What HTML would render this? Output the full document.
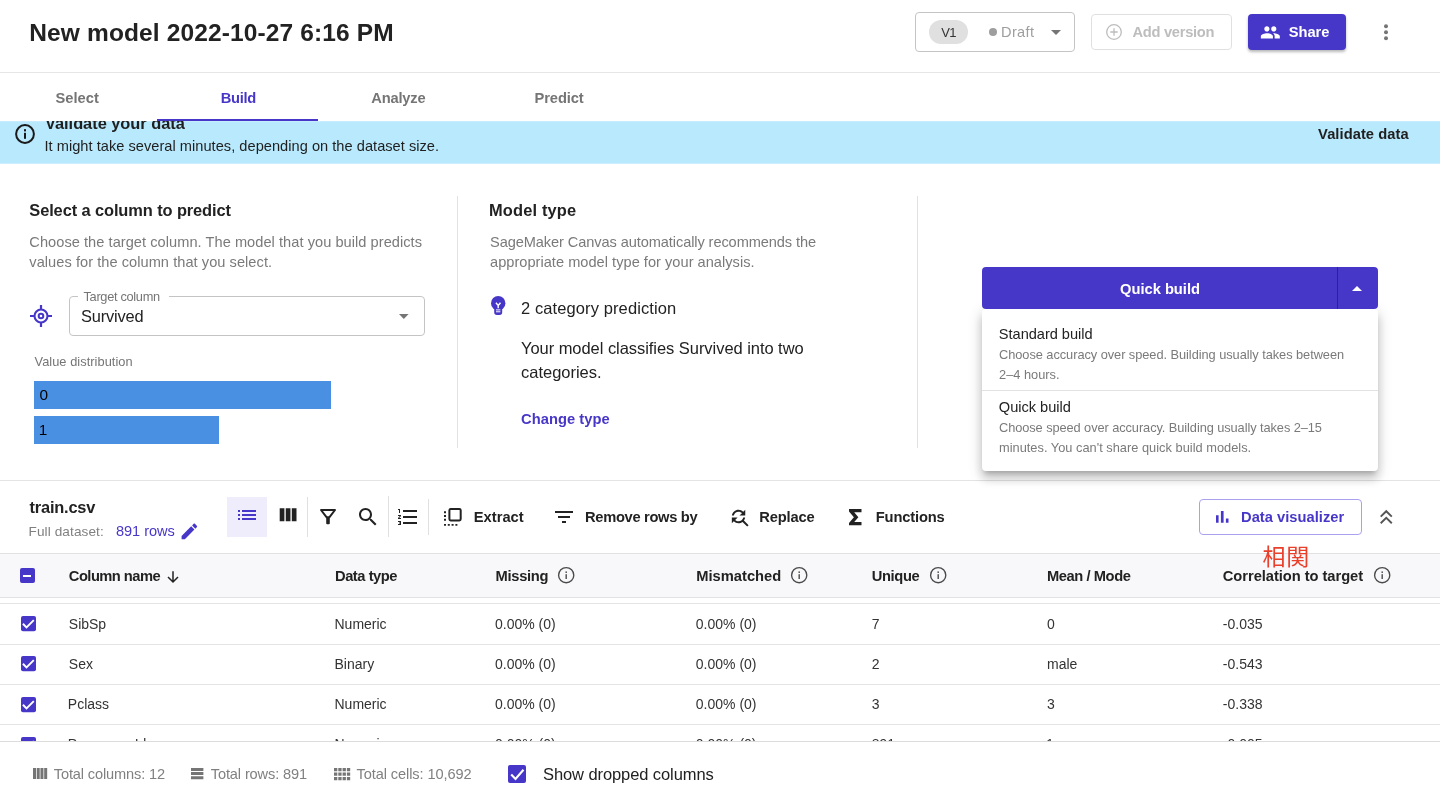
<!DOCTYPE html>
<html lang="en">
<head>
<meta charset="utf-8">
<title>New model 2022-10-27 6:16 PM</title>
<style>
*{box-sizing:border-box;margin:0;padding:0}
html,body{width:1440px;height:802px;overflow:hidden;background:#fff}
body{position:relative;font-family:"Liberation Sans",sans-serif;color:#222}
.t{position:absolute;white-space:pre;line-height:1;color:#222;z-index:2}
.abs,.abs>*{position:absolute}
.abs{left:0;top:0}
svg{position:absolute;overflow:visible}
.hl{position:absolute;height:1px;background:#e4e4e4}
.vl{position:absolute;width:1px;background:#e2e2e2}
</style>
</head>
<body>
<div id="root" style="position:absolute;left:0;top:0;width:1440px;height:802px;will-change:transform">
<!-- header -->
<div class="abs" style="left:0;top:72px;width:1440px;height:1px;background:#e6e6e6"></div>
<div class="abs" style="left:915px;top:12px;width:160px;height:40px;border:1px solid #c4c4c4;border-radius:4px"></div>
<div class="abs" style="left:929.2px;top:20px;width:39px;height:24px;border-radius:12px;background:#e0e0e0"></div>
<div class="abs" style="left:989px;top:28px;width:8px;height:8px;border-radius:4px;background:#9e9e9e"></div>
<svg style="left:1050.5px;top:30px" width="10" height="5" viewBox="0 0 10 5"><path d="M0 0h10L5 5z" fill="#757575"/></svg>
<div class="abs" style="left:1091px;top:14px;width:141px;height:36px;border:1px solid #e0e0e0;border-radius:4px"></div>
<svg style="left:1105.7px;top:24px" width="16" height="16" viewBox="0 0 16 16" fill="none" stroke="#bdbdbd" stroke-width="1.3"><circle cx="8" cy="8" r="7.3"/><path d="M8 4.3v7.4M4.3 8h7.4"/></svg>
<div class="abs" style="left:1248px;top:14px;width:98px;height:36px;border-radius:4px;background:#4737c8;box-shadow:0 2px 3px rgba(0,0,0,.28)"></div>
<svg style="left:1260.100px;top:21.700px" width="20.700" height="20.700" viewBox="0 0 24 24"><path fill="#fff" d="M16 11c1.66 0 2.99-1.34 2.99-3S17.66 5 16 5c-1.66 0-3 1.34-3 3s1.34 3 3 3zm-8 0c1.66 0 2.99-1.34 2.99-3S9.660 5 8 5C6.340 5 5 6.340 5 8s1.340 3 3 3zm0 2c-2.330 0-7 1.170-7 3.500V19h14v-2.500c0-2.330-4.670-3.500-7-3.500zm8 0c-.29 0-.62.020-.97.050 1.160.84 1.970 1.970 1.970 3.450V19h6v-2.500c0-2.330-4.670-3.500-7-3.500z"/></svg>
<svg style="left:1383.8px;top:24px" width="4" height="17" viewBox="0 0 4 17"><circle cx="2" cy="2.200" r="2" fill="#757575"/><circle cx="2" cy="8.200" r="2" fill="#757575"/><circle cx="2" cy="14.200" r="2" fill="#757575"/></svg>

<!-- banner -->
<div class="abs" style="left:0;top:121px;width:1440px;height:43px;background:linear-gradient(#c6edfd,#c6edfd 1px,#b9e9fc 1px,#b9e9fc 42px,#cdeffd 42px);overflow:hidden">
  <span style="position:absolute;left:45px;top:-6px;font-size:16.400px;font-weight:700;line-height:1;letter-spacing:-.03px;white-space:pre;color:#1f1f1f">Validate your data</span>
</div>
<svg style="left:15px;top:123.800px" width="20" height="20" viewBox="0 0 20 20"><circle cx="10" cy="10" r="8.900" fill="none" stroke="#1a1a1a" stroke-width="2"/><rect x="9" y="8.800" width="2" height="6" fill="#1a1a1a"/><rect x="9" y="5.200" width="2" height="2.200" fill="#1a1a1a"/></svg>
<!-- tab underline -->
<div class="abs" style="left:157.300px;top:119px;width:160.700px;height:2px;background:#4737c8"></div>

<!-- section dividers -->
<div class="vl" style="left:457px;top:195.500px;height:252.500px"></div>
<div class="vl" style="left:917px;top:195.500px;height:252.500px"></div>
<div class="hl" style="left:0;top:480px;width:1440px"></div>

<!-- section 1: target select -->
<svg style="left:29px;top:304px" width="24" height="24" viewBox="0 0 24 24" fill="none" stroke="#4737c8"><circle cx="12" cy="12" r="6.500" stroke-width="2.100"/><circle cx="12" cy="12" r="2.300" stroke-width="2"/><path d="M12 1v5M12 18v5M1 12h5M18 12h5" stroke-width="2.200"/></svg>
<div class="abs" style="left:68.900px;top:296px;width:355.800px;height:39.900px;border:1px solid #c4c4c4;border-radius:4px"></div>
<div class="abs" style="left:77.500px;top:295px;width:91.200px;height:3px;background:#fff"></div>
<svg style="left:398.800px;top:314px" width="9.600" height="5" viewBox="0 0 10 5"><path d="M0 0h10L5 5z" fill="#757575"/></svg>
<div class="abs" style="left:34px;top:381px;width:296.800px;height:27.800px;background:#4a90e2"></div>
<div class="abs" style="left:34px;top:416px;width:184.800px;height:27.800px;background:#4a90e2"></div>

<!-- section 2: bulb -->
<svg style="left:490.600px;top:296px" width="14.400" height="19" viewBox="0 0 14.400 19"><circle cx="7.200" cy="7.200" r="7.200" fill="#4737c8"/><path d="M3.200 10h8v6.300a2.700 2.700 0 0 1-2.700 2.700h-2.600a2.700 2.700 0 0 1-2.700-2.700z" fill="#4737c8"/><path d="M4.900 6.700l2.300 2.700 2.300-2.700M7.200 9.400v2.800" stroke="#fff" stroke-width="1.400" fill="none"/><path d="M5 13.900h4.400M5 15.800h4.400" stroke="#fff" stroke-width="1"/></svg>

<!-- section 3: quick build button + menu -->
<div class="abs" style="left:982px;top:309px;width:396px;height:162px;background:#fff;border-radius:4px;box-shadow:0 5px 5px -3px rgba(0,0,0,.2),0 8px 10px 1px rgba(0,0,0,.14),0 3px 14px 2px rgba(0,0,0,.12)"></div>
<div class="abs" style="left:982px;top:390px;width:396px;height:1px;background:#e2e2e2"></div>
<div class="abs" style="left:982px;top:267px;width:396px;height:42.400px;border-radius:4px;background:#4737c8"></div>
<div class="abs" style="left:1336.700px;top:267px;width:1px;height:42.400px;background:#2c1fa6"></div>
<svg style="left:1352.300px;top:286px" width="10" height="5" viewBox="0 0 10 5"><path d="M0 5h10L5 0z" fill="#fff"/></svg>

<!-- toolbar -->
<svg style="left:178.700px;top:520.900px" width="20.800" height="20.800" viewBox="0 0 24 24"><path fill="#4737c8" d="M3 17.250V21h3.750L17.810 9.940l-3.750-3.750L3 17.250zM20.710 7.040c.39-.39.39-1.020 0-1.410l-2.340-2.340c-.39-.39-1.020-.39-1.410 0l-1.830 1.830 3.750 3.750 1.830-1.830z"/></svg>
<div class="abs" style="left:227.200px;top:497px;width:40.200px;height:40px;background:#efedfb"></div>
<svg style="left:235.200px;top:502.800px" width="24" height="24" viewBox="0 0 24 24"><path fill="#4737c8" d="M3 13h2v-2H3v2zm0 4h2v-2H3v2zm0-8h2V7H3v2zm4 4h14v-2H7v2zm0 4h14v-2H7v2zM7 7v2h14V7H7z"/></svg>
<svg style="left:275.500px;top:503px" width="24" height="24" viewBox="0 0 24 24"><path fill="#222" d="M3.700 5.300h4.700v13h-4.700zM9.750 5.300h4.700v13h-4.700zM15.800 5.300h4.700v13h-4.700z"/></svg>
<div class="vl" style="left:307px;top:497px;height:40px;background:#e0e0e0"></div>
<svg style="left:316px;top:504.800px" width="24" height="24" viewBox="0 0 24 24"><path fill="none" stroke="#222" stroke-width="2" stroke-linejoin="round" d="M5 5h14l-5.500 7.200h-3z"/><path fill="#222" d="M10.200 12h3.600v6.300a1 1 0 0 1-1 1h-1.600a1 1 0 0 1-1-1z"/></svg>
<svg style="left:355.500px;top:504.800px" width="24" height="24" viewBox="0 0 24 24"><path fill="#222" d="M15.500 14h-.79l-.28-.27C15.410 12.590 16 11.110 16 9.500 16 5.910 13.090 3 9.500 3S3 5.910 3 9.500 5.910 16 9.500 16c1.610 0 3.090-.59 4.230-1.570l.27.28v.79l5 4.990L20.490 19l-4.990-5zm-6 0C7.010 14 5 11.990 5 9.500S7.010 5 9.500 5 14 7.010 14 9.500 11.990 14 9.500 14z"/></svg>
<div class="vl" style="left:388px;top:496px;height:41px;background:#e0e0e0"></div>
<svg style="left:396px;top:505px" width="24" height="24" viewBox="0 0 24 24"><path fill="#222" d="M2 17h2v.5H3v1h1v.5H2v1h3v-4H2v1zm1-9h1V4H2v1h1v3zm-1 3h1.800L2 13.100v.9h3v-1H3.200L5 10.900V10H2v1zm5-6v2h14V5H7zm0 14h14v-2H7v2zm0-6h14v-2H7v2z"/></svg>
<div class="vl" style="left:428px;top:498.800px;height:36.500px;background:#e0e0e0"></div>
<!-- extract icon -->
<svg style="left:444px;top:507.900px" width="17.700" height="17.700" viewBox="0 0 17.700 17.700" fill="none" stroke="#222"><rect x="5.400" y="1" width="11.300" height="11.400" rx="1.300" stroke-width="2"/><path d="M1 3.200v11" stroke-width="2" stroke-dasharray="2 1.800"/><path d="M0 16.800h14.500" stroke-width="1.800" stroke-dasharray="2 1.800"/></svg>
<!-- remove rows (filter_list) -->
<svg style="left:552.200px;top:505px" width="24" height="24" viewBox="0 0 24 24"><path fill="#222" d="M10 18h4v-2h-4v2zM3 6v2h18V6H3zm3 7h12v-2H6v2z"/></svg>
<!-- replace -->
<svg style="left:728px;top:506px" width="23" height="23" viewBox="0 0 24 24"><path fill="#222" d="M11 6c1.380 0 2.630.56 3.540 1.460L12 10h6V4l-2.050 2.050C14.680 4.780 12.930 4 11 4c-3.530 0-6.430 2.610-6.920 6H6.100c.46-2.280 2.480-4 4.900-4zm5.640 9.140c.66-.9 1.120-1.970 1.280-3.140H15.900c-.46 2.280-2.480 4-4.900 4-1.380 0-2.630-.56-3.540-1.460L10 12H4v6l2.050-2.050C7.320 17.220 9.070 18 11 18c1.550 0 2.980-.51 4.140-1.360L20 21.490 21.490 20l-4.850-4.860z"/></svg>
<!-- sigma -->
<svg style="left:848.800px;top:508.800px" width="12.500" height="16.300" viewBox="0 0 12.500 16.300"><path fill="#222" d="M0 0h12.500v3.200H5.200l4.200 4.950-4.200 4.950h7.300v3.200H0v-2.400l4.900-5.750L0 2.400z"/></svg>
<!-- data visualizer -->
<div class="abs" style="left:1199px;top:499px;width:162.500px;height:36px;border:1px solid #a9a0ee;border-radius:4px"></div>
<svg style="left:1216px;top:511.200px" width="12.500" height="11.800" viewBox="0 0 12.500 11.800"><path fill="#4737c8" d="M0 4.300h2.600v7.500H0zM4.900 0h2.700v11.800H4.900zM9.900 7.400h2.600v4.400H9.900z"/></svg>
<svg style="left:1379.800px;top:510px" width="12.500" height="14" viewBox="0 0 12.500 14" fill="none" stroke="#555" stroke-width="1.900"><path d="M.7 6.600L6.250 1.200 11.800 6.600M.7 13.200L6.250 7.800 11.800 13.200"/></svg>

<!-- table header -->
<div class="abs" style="left:0;top:553px;width:1440px;height:45px;background:#f8f8fa;border-top:1px solid #e2e2e2;border-bottom:1px solid #e2e2e2"></div>
<div class="abs" style="left:19.500px;top:568.200px;width:15px;height:15px;border-radius:2px;background:#4737c8"></div>
<div class="abs" style="left:23px;top:574.800px;width:8px;height:2px;background:#fff"></div>
<svg style="left:167px;top:571px" width="12" height="12" viewBox="0 0 12 12" fill="none" stroke="#222" stroke-width="1.500"><path d="M6 .3v10.500M1 6l5 5 5-5"/></svg>
<svg style="left:557.5px;top:567.4px" width="16.400" height="16.400" viewBox="0 0 16.400 16.400"><circle cx="8.200" cy="8.200" r="7.600" fill="none" stroke="#4a4a4a" stroke-width="1.350"/><rect x="7.500" y="7.200" width="1.400" height="4.800" fill="#4a4a4a"/><rect x="7.500" y="4.400" width="1.400" height="1.600" fill="#4a4a4a"/></svg>
<svg style="left:790.7px;top:567.4px" width="16.400" height="16.400" viewBox="0 0 16.400 16.400"><circle cx="8.200" cy="8.200" r="7.600" fill="none" stroke="#4a4a4a" stroke-width="1.350"/><rect x="7.500" y="7.200" width="1.400" height="4.800" fill="#4a4a4a"/><rect x="7.500" y="4.400" width="1.400" height="1.600" fill="#4a4a4a"/></svg>
<svg style="left:930.1px;top:567.4px" width="16.400" height="16.400" viewBox="0 0 16.400 16.400"><circle cx="8.200" cy="8.200" r="7.600" fill="none" stroke="#4a4a4a" stroke-width="1.350"/><rect x="7.500" y="7.200" width="1.400" height="4.800" fill="#4a4a4a"/><rect x="7.500" y="4.400" width="1.400" height="1.600" fill="#4a4a4a"/></svg>
<svg style="left:1373.6px;top:567.4px" width="16.400" height="16.400" viewBox="0 0 16.400 16.400"><circle cx="8.200" cy="8.200" r="7.600" fill="none" stroke="#4a4a4a" stroke-width="1.350"/><rect x="7.500" y="7.200" width="1.400" height="4.800" fill="#4a4a4a"/><rect x="7.500" y="4.400" width="1.400" height="1.600" fill="#4a4a4a"/></svg>

<!-- CJK overlay -->
<span class="t" style="left:1262.600px;top:544.300px;font-size:23px;letter-spacing:.6px;color:#e9402b;font-family:'Liberation Sans','Noto Sans CJK JP',sans-serif;line-height:1.150;z-index:4">相関</span>

<!-- rows -->
<div class="hl" style="left:0;top:603.300px;width:1440px;background:#e4e4e4"></div>
<div class="hl" style="left:0;top:643.500px;width:1440px;background:#e4e4e4"></div>
<div class="hl" style="left:0;top:683.700px;width:1440px;background:#e4e4e4"></div>
<div class="hl" style="left:0;top:724.200px;width:1440px;background:#e4e4e4"></div>
<svg style="left:20.600px;top:616.0px" width="15" height="15.200" viewBox="0 0 15 15.200"><rect width="15" height="15.200" rx="2" fill="#4737c8"/><path d="M1.900 7.800l3.600 3.600 7.300-7.200" fill="none" stroke="#fff" stroke-width="1.900"/></svg>
<svg style="left:20.600px;top:656.3px" width="15" height="15.200" viewBox="0 0 15 15.200"><rect width="15" height="15.200" rx="2" fill="#4737c8"/><path d="M1.900 7.800l3.600 3.600 7.300-7.200" fill="none" stroke="#fff" stroke-width="1.900"/></svg>
<svg style="left:20.600px;top:696.6px" width="15" height="15.200" viewBox="0 0 15 15.200"><rect width="15" height="15.200" rx="2" fill="#4737c8"/><path d="M1.900 7.800l3.600 3.600 7.300-7.200" fill="none" stroke="#fff" stroke-width="1.900"/></svg>
<svg style="left:20.600px;top:736.9px" width="15" height="15.200" viewBox="0 0 15 15.200"><rect width="15" height="15.200" rx="2" fill="#4737c8"/><path d="M1.900 7.800l3.600 3.600 7.300-7.200" fill="none" stroke="#fff" stroke-width="1.900"/></svg>


<!-- footer -->
<div class="abs" style="left:0;top:741px;width:1440px;height:61px;background:#fff;border-top:1px solid #dcdcdc;z-index:5"></div>
<svg style="left:32.500px;top:768px;z-index:6" width="14.200" height="11" viewBox="0 0 14.200 11"><path fill="#757575" d="M0 0h3v11H0zM3.730 0h3v11h-3zM7.460 0h3v11h-3zM11.190 0h3v11h-3z"/></svg>
<svg style="left:191.400px;top:768.300px;z-index:6" width="12.400" height="11.200" viewBox="0 0 12.400 11.200"><path fill="#757575" d="M0 0h12.400v3H0zM0 4.100h12.400v3H0zM0 8.200h12.400v3H0z"/></svg>
<svg style="left:333.600px;top:768px;z-index:6" width="16.200" height="12.200" viewBox="0 0 16.200 12.200"><path fill="#757575" d="M0 0h3.300v3.300H0zM4.300 0h3.300v3.300H4.300zM8.600 0h3.300v3.300H8.600zM12.900 0h3.300v3.300h-3.300zM0 4.450h3.300v3.300H0zM4.300 4.450h3.300v3.300H4.300zM8.600 4.450h3.300v3.300H8.600zM12.900 4.450h3.300v3.300h-3.300zM0 8.900h3.300v3.300H0zM4.300 8.900h3.300v3.300H4.300zM8.600 8.900h3.300v3.300H8.600zM12.900 8.900h3.300v3.300h-3.300z"/></svg>
<div class="abs" style="left:508.400px;top:764.700px;width:18px;height:18.300px;border-radius:2px;background:#4737c8;z-index:6"></div>
<svg style="left:508.400px;top:764.700px;z-index:7" width="18" height="18.300" viewBox="0 0 18 18" fill="none" stroke="#fff" stroke-width="2.100"><path d="M3.200 9.400l4.300 4.400 8-9.200"/></svg>


<span class="t" style="left:29.30px;top:21.0px;font-size:24.5px;font-weight:700;letter-spacing:0.128px;">New model 2022-10-27 6:16 PM</span>
<span class="t" style="left:941.20px;top:26.0px;font-size:13px;color:#333;letter-spacing:-0.571px;">V1</span>
<span class="t" style="left:1001.00px;top:25.0px;font-size:14.6px;color:#9e9e9e;letter-spacing:0.358px;">Draft</span>
<span class="t" style="left:1132.50px;top:25.0px;font-size:14.7px;font-weight:700;color:#bdbdbd;letter-spacing:-0.290px;">Add version</span>
<span class="t" style="left:1288.80px;top:25.0px;font-size:14.7px;font-weight:700;color:#fff;letter-spacing:-0.063px;">Share</span>
<span class="t" style="left:55.50px;top:91.0px;font-size:14.7px;font-weight:700;color:#757575;letter-spacing:0.023px;">Select</span>
<span class="t" style="left:220.80px;top:91.0px;font-size:14.7px;font-weight:700;color:#4737c8;letter-spacing:-0.335px;">Build</span>
<span class="t" style="left:371.30px;top:91.0px;font-size:14.7px;font-weight:700;color:#757575;letter-spacing:-0.190px;">Analyze</span>
<span class="t" style="left:534.50px;top:91.0px;font-size:14.7px;font-weight:700;color:#757575;letter-spacing:-0.100px;">Predict</span>
<span class="t" style="left:44.50px;top:139.0px;font-size:14.6px;color:#1f1f1f;letter-spacing:0.032px;">It might take several minutes, depending on the dataset size.</span>
<span class="t" style="left:1318.10px;top:127.0px;font-size:14.7px;font-weight:700;color:#1f1f1f;letter-spacing:0.056px;">Validate data</span>
<span class="t" style="left:29.30px;top:202.0px;font-size:16.4px;font-weight:700;letter-spacing:-0.094px;">Select a column to predict</span>
<span class="t" style="left:29.30px;top:235.0px;font-size:14.6px;color:#7a7a7a;letter-spacing:0.048px;">Choose the target column. The model that you build predicts</span>
<span class="t" style="left:29.30px;top:255.0px;font-size:14.6px;color:#7a7a7a;letter-spacing:0.049px;">values for the column that you select.</span>
<span class="t" style="left:83.50px;top:291.0px;font-size:12.8px;color:#757575;letter-spacing:-0.313px;">Target column</span>
<span class="t" style="left:81.00px;top:308.0px;font-size:16.4px;letter-spacing:-0.165px;">Survived</span>
<span class="t" style="left:34.50px;top:356.0px;font-size:12.8px;color:#757575;letter-spacing:0.053px;">Value distribution</span>
<span class="t" style="left:39.50px;top:387.0px;font-size:15.4px;color:#000;letter-spacing:0.000px;">0</span>
<span class="t" style="left:38.80px;top:422.0px;font-size:15.4px;color:#000;letter-spacing:0.000px;">1</span>
<span class="t" style="left:489.00px;top:202.0px;font-size:16.4px;font-weight:700;letter-spacing:0.168px;">Model type</span>
<span class="t" style="left:490.00px;top:235.0px;font-size:14.6px;color:#7a7a7a;letter-spacing:-0.091px;">SageMaker Canvas automatically recommends the</span>
<span class="t" style="left:490.00px;top:255.0px;font-size:14.6px;color:#7a7a7a;letter-spacing:0.023px;">appropriate model type for your analysis.</span>
<span class="t" style="left:521.00px;top:300.0px;font-size:16.5px;letter-spacing:0.100px;">2 category prediction</span>
<span class="t" style="left:521.00px;top:340.0px;font-size:16.5px;letter-spacing:-0.051px;">Your model classifies Survived into two</span>
<span class="t" style="left:521.00px;top:364.0px;font-size:16.5px;letter-spacing:-0.013px;">categories.</span>
<span class="t" style="left:521.00px;top:412.0px;font-size:14.7px;font-weight:700;color:#4737c8;letter-spacing:0.053px;">Change type</span>
<span class="t" style="left:1120.00px;top:282.0px;font-size:14.7px;font-weight:700;color:#fff;letter-spacing:0.000px;">Quick build</span>
<span class="t" style="left:998.80px;top:327.0px;font-size:14.6px;letter-spacing:-0.023px;">Standard build</span>
<span class="t" style="left:999.00px;top:349.0px;font-size:12.8px;color:#7a7a7a;letter-spacing:-0.048px;">Choose accuracy over speed. Building usually takes between</span>
<span class="t" style="left:999.00px;top:369.0px;font-size:12.8px;color:#7a7a7a;letter-spacing:0.009px;">2–4 hours.</span>
<span class="t" style="left:998.80px;top:400.0px;font-size:14.6px;letter-spacing:-0.008px;">Quick build</span>
<span class="t" style="left:999.00px;top:422.0px;font-size:12.8px;color:#7a7a7a;letter-spacing:-0.075px;">Choose speed over accuracy. Building usually takes 2–15</span>
<span class="t" style="left:999.00px;top:442.0px;font-size:12.8px;color:#7a7a7a;letter-spacing:0.016px;">minutes. You can&#x27;t share quick build models.</span>
<span class="t" style="left:29.50px;top:499.0px;font-size:16.4px;font-weight:700;letter-spacing:-0.188px;">train.csv</span>
<span class="t" style="left:28.50px;top:525.0px;font-size:13.6px;color:#808080;letter-spacing:0.102px;">Full dataset:</span>
<span class="t" style="left:116.00px;top:524.0px;font-size:14.6px;color:#4737c8;letter-spacing:-0.060px;">891 rows</span>
<span class="t" style="left:473.80px;top:510.0px;font-size:14.7px;font-weight:700;letter-spacing:0.015px;">Extract</span>
<span class="t" style="left:585.00px;top:510.0px;font-size:14.7px;font-weight:700;letter-spacing:-0.312px;">Remove rows by</span>
<span class="t" style="left:759.30px;top:510.0px;font-size:14.7px;font-weight:700;letter-spacing:-0.161px;">Replace</span>
<span class="t" style="left:875.80px;top:510.0px;font-size:14.7px;font-weight:700;letter-spacing:-0.162px;">Functions</span>
<span class="t" style="left:1241.00px;top:510.0px;font-size:14.7px;font-weight:700;color:#4737c8;letter-spacing:0.025px;">Data visualizer</span>
<span class="t" style="left:68.80px;top:569.0px;font-size:14.7px;font-weight:700;letter-spacing:-0.524px;">Column name</span>
<span class="t" style="left:335.00px;top:569.0px;font-size:14.7px;font-weight:700;letter-spacing:-0.456px;">Data type</span>
<span class="t" style="left:495.50px;top:569.0px;font-size:14.7px;font-weight:700;letter-spacing:-0.284px;">Missing</span>
<span class="t" style="left:696.30px;top:569.0px;font-size:14.7px;font-weight:700;letter-spacing:-0.001px;">Mismatched</span>
<span class="t" style="left:871.80px;top:569.0px;font-size:14.7px;font-weight:700;letter-spacing:-0.381px;">Unique</span>
<span class="t" style="left:1047.00px;top:569.0px;font-size:14.7px;font-weight:700;letter-spacing:-0.426px;">Mean / Mode</span>
<span class="t" style="left:1222.80px;top:569.0px;font-size:14.7px;font-weight:700;letter-spacing:-0.044px;">Correlation to target</span>
<span class="t" style="left:68.80px;top:617.0px;font-size:14px;color:#333;letter-spacing:0.000px;">SibSp</span>
<span class="t" style="left:334.50px;top:617.0px;font-size:14px;color:#333;letter-spacing:0.000px;">Numeric</span>
<span class="t" style="left:495.00px;top:617.0px;font-size:14px;color:#333;letter-spacing:0.000px;">0.00% (0)</span>
<span class="t" style="left:695.80px;top:617.0px;font-size:14px;color:#333;letter-spacing:0.000px;">0.00% (0)</span>
<span class="t" style="left:871.80px;top:617.0px;font-size:14px;color:#333;letter-spacing:0.000px;">7</span>
<span class="t" style="left:1047.00px;top:617.0px;font-size:14px;color:#333;letter-spacing:0.000px;">0</span>
<span class="t" style="left:1222.80px;top:617.0px;font-size:14px;color:#333;letter-spacing:0.000px;">-0.035</span>
<span class="t" style="left:68.80px;top:657.0px;font-size:14px;color:#333;letter-spacing:0.000px;">Sex</span>
<span class="t" style="left:334.50px;top:657.0px;font-size:14px;color:#333;letter-spacing:0.000px;">Binary</span>
<span class="t" style="left:495.00px;top:657.0px;font-size:14px;color:#333;letter-spacing:0.000px;">0.00% (0)</span>
<span class="t" style="left:695.80px;top:657.0px;font-size:14px;color:#333;letter-spacing:0.000px;">0.00% (0)</span>
<span class="t" style="left:871.80px;top:657.0px;font-size:14px;color:#333;letter-spacing:0.000px;">2</span>
<span class="t" style="left:1047.00px;top:657.0px;font-size:14px;color:#333;letter-spacing:0.000px;">male</span>
<span class="t" style="left:1222.80px;top:657.0px;font-size:14px;color:#333;letter-spacing:0.000px;">-0.543</span>
<span class="t" style="left:67.80px;top:697.0px;font-size:14px;color:#333;letter-spacing:0.000px;">Pclass</span>
<span class="t" style="left:334.50px;top:697.0px;font-size:14px;color:#333;letter-spacing:0.000px;">Numeric</span>
<span class="t" style="left:495.00px;top:697.0px;font-size:14px;color:#333;letter-spacing:0.000px;">0.00% (0)</span>
<span class="t" style="left:695.80px;top:697.0px;font-size:14px;color:#333;letter-spacing:0.000px;">0.00% (0)</span>
<span class="t" style="left:871.80px;top:697.0px;font-size:14px;color:#333;letter-spacing:0.000px;">3</span>
<span class="t" style="left:1047.00px;top:697.0px;font-size:14px;color:#333;letter-spacing:0.000px;">3</span>
<span class="t" style="left:1222.80px;top:697.0px;font-size:14px;color:#333;letter-spacing:0.000px;">-0.338</span>
<span class="t" style="left:67.80px;top:737.0px;font-size:14px;color:#333;letter-spacing:0.000px;">PassengerId</span>
<span class="t" style="left:334.50px;top:737.0px;font-size:14px;color:#333;letter-spacing:0.000px;">Numeric</span>
<span class="t" style="left:495.00px;top:737.0px;font-size:14px;color:#333;letter-spacing:0.000px;">0.00% (0)</span>
<span class="t" style="left:695.80px;top:737.0px;font-size:14px;color:#333;letter-spacing:0.000px;">0.00% (0)</span>
<span class="t" style="left:871.80px;top:737.0px;font-size:14px;color:#333;letter-spacing:0.000px;">891</span>
<span class="t" style="left:1046.00px;top:737.0px;font-size:14px;color:#333;letter-spacing:0.000px;">1</span>
<span class="t" style="left:1222.80px;top:737.0px;font-size:14px;color:#333;letter-spacing:0.000px;">-0.005</span>
<span class="t" style="left:53.80px;top:767.0px;font-size:14.6px;color:#808080;letter-spacing:-0.140px;z-index:6;">Total columns: 12</span>
<span class="t" style="left:210.80px;top:767.0px;font-size:14.6px;color:#808080;letter-spacing:-0.131px;z-index:6;">Total rows: 891</span>
<span class="t" style="left:356.50px;top:767.0px;font-size:14.6px;color:#808080;letter-spacing:-0.095px;z-index:6;">Total cells: 10,692</span>
<span class="t" style="left:543.00px;top:766.0px;font-size:16.5px;letter-spacing:-0.089px;z-index:6;">Show dropped columns</span>
</div>
</body>
</html>
